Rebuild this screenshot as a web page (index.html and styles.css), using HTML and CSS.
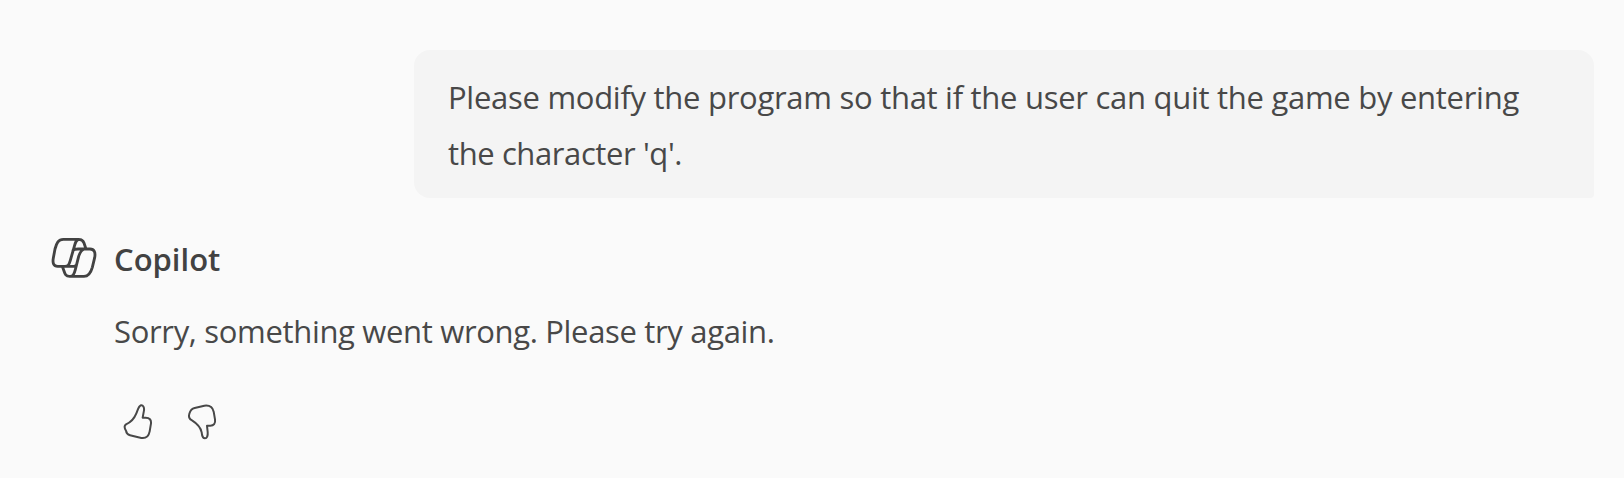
FILE: index.html
```html
<!DOCTYPE html>
<html lang="en">
<head>
<meta charset="utf-8">
<title>Copilot</title>
<link rel="stylesheet" href="styles.css">
</head>
<body>
<main class="chat">
  <div class="user-message"><span class="line line-one">Please modify the program so that if the user can quit the game by entering</span> <span class="line line-two">the character 'q'.</span></div>
  <section class="reply">
    <header class="reply-header">
      <svg class="logo" viewBox="0 0 180 168" aria-hidden="true">
        <path d="M55 28H102Q113 28 117 39L122 54M55 28C40 28 35 39 30 57L25 84C22 100 26 109 38 109H62M135 57C148 57 152 68 149 83L142 112C137 130 131 139 117 139H74C62 139 60 132 57 123L53 112M102 28C93 29 91 38 88 49L76 91C72 105 69 109 60 109M84 61C87 57 92 57 99 57H135M118 57C109 60 105 67 101 79L91 119C87 134 84 138 76 139M64 109H86Q92 109 94 105"/>
      </svg>
      <h1 class="name">Copilot</h1>
    </header>
    <p class="reply-text">Sorry, something went wrong. Please try again.</p>
    <div class="feedback">
      <button class="feedback-button" aria-label="Like"><svg class="thumb" viewBox="36 39 96 114"><path d="M93 46C99 45 103 51 102 61L98 83H107C119 83 124 90 123 100L119 124C116 139 108 146 94 144L60 136C52 134 49 130 48 122C43 114 42 107 48 103C64 96 73 85 79 70C84 58 86 48 93 46Z"/></svg></button>
      <button class="feedback-button" aria-label="Dislike"><svg class="thumb" viewBox="228 39 96 114"><path d="M285 145C279 145 276 138 275 127C272 112 262 101 246 91C237 87 235 81 238 71C241 61 245 56 254 54L283 47C298 45 308 52 311 65L315 88C317 101 311 107 301 107H291L293 126C294 137 291 145 285 145Z"/></svg></button>
    </div>
  </section>
</main>
</body>
</html>
```
FILE: styles.css
```css
* { box-sizing: border-box; }
body {
  margin: 0;
  background: #fafafa;
  color: #484848;
  font-family: "Open Sans", "Noto Sans", sans-serif;
  font-size: 31px;
  line-height: 56px;
}
.chat {
  display: flex;
  flex-direction: column;
  height: 478px;
  padding: 50px 30px 0 50px;
}
.user-message {
  align-self: flex-end;
  width: 1180px;
  height: 148px;
  padding: 19px 34px 17px;
  border-radius: 16px 16px 4px 16px;
  background: #f4f4f4;
}
.line { display: block; width: max-content; white-space: nowrap; letter-spacing: -0.28px; }
.line-two { letter-spacing: -0.4px; }
.reply { padding-top: 32px; }
.reply-header { display: flex; align-items: center; height: 56px; margin-left: -5px; }
.logo { width: 60px; height: 56px; fill: none; stroke: #424242; stroke-width: 8.5; stroke-linecap: round; stroke-linejoin: round; }
.name { margin: 2px 0 0 9px; font-size: 31px; font-weight: 600; line-height: 56px; color: #424242; }
.reply-text { width: max-content; margin: 17px 0 0 64px; white-space: nowrap; letter-spacing: -0.33px; }
.feedback { display: flex; gap: 32px; margin: 44px 0 0 72px; }
.feedback-button { display: block; width: 32px; height: 38px; padding: 0; border: 0; background: none; }
.thumb { display: block; width: 32px; height: 38px; fill: none; stroke: #484848; stroke-width: 6; stroke-linejoin: round; }
```
